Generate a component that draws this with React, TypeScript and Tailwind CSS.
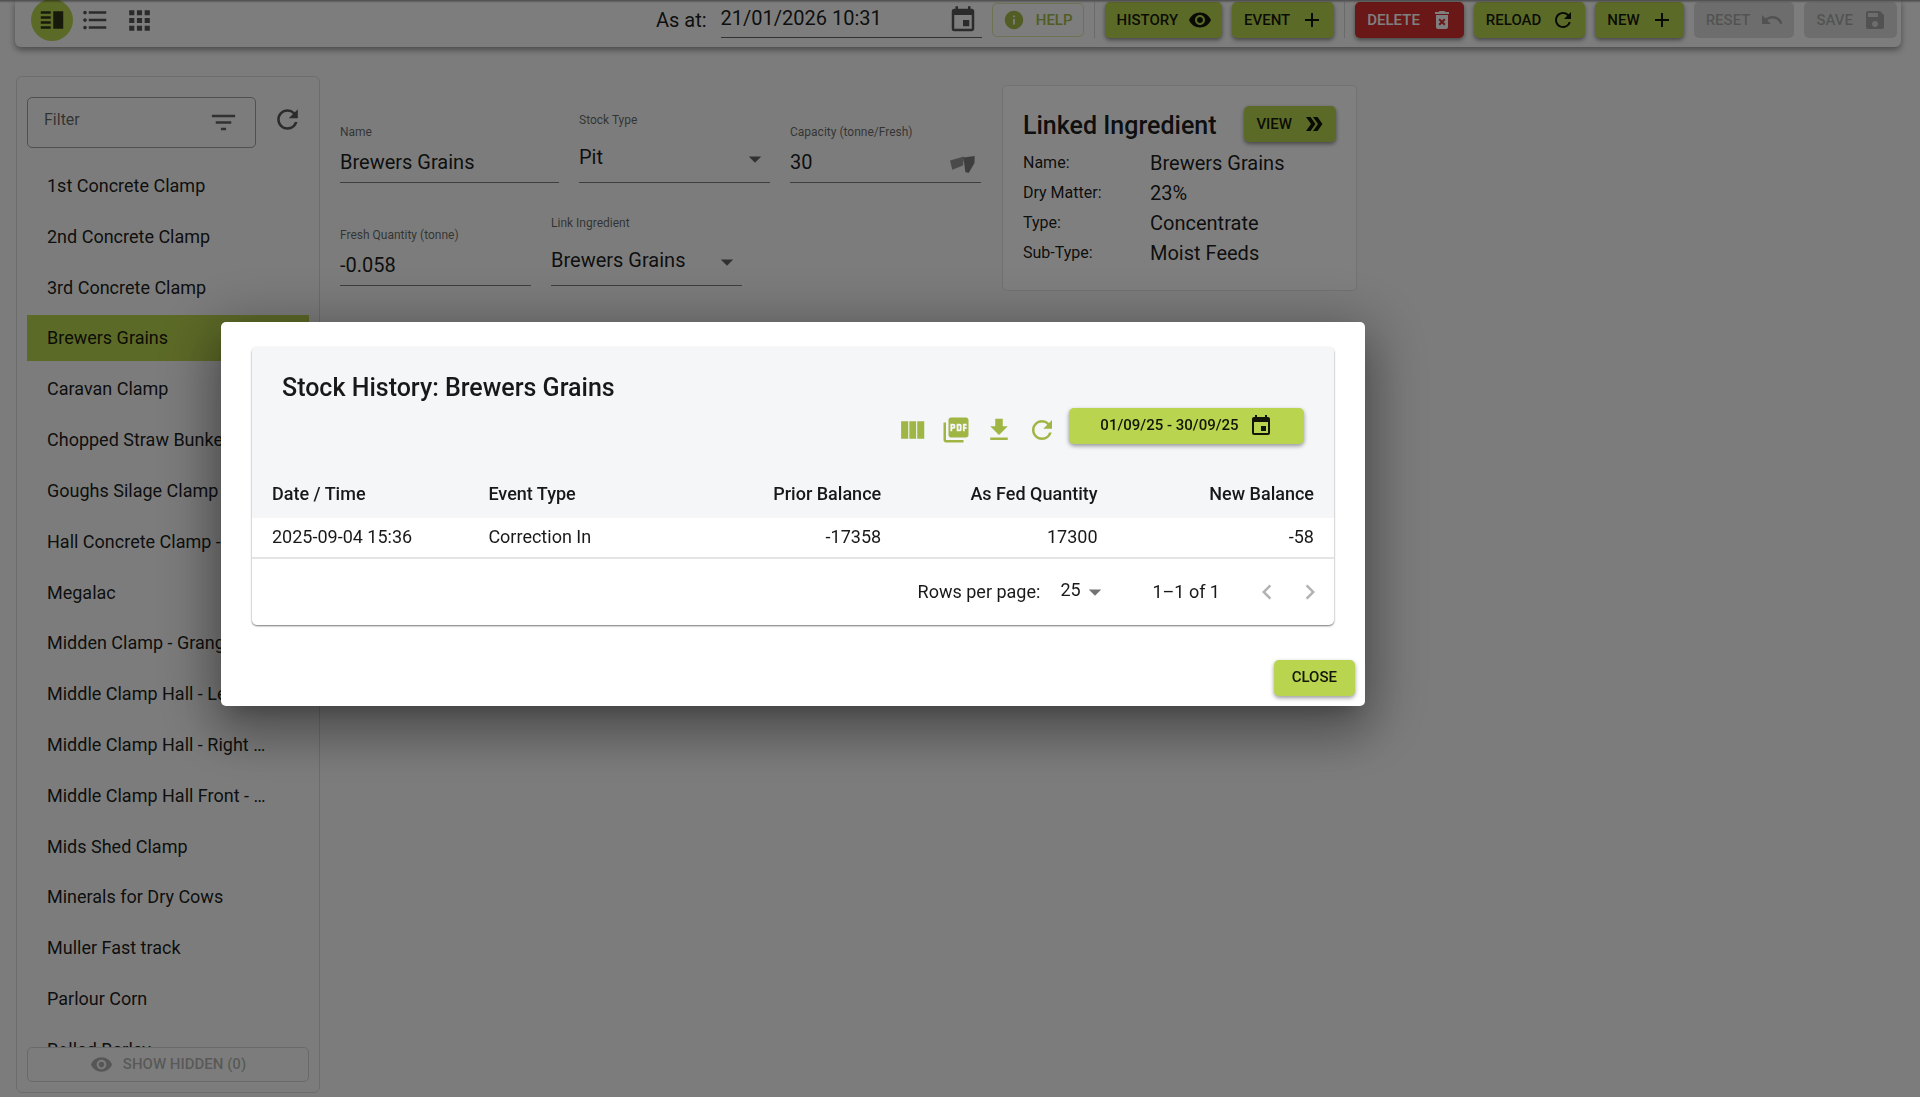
import React from "react";
import clsx from "clsx";
import type { IconType } from "react-icons";
import {
  MdAdd,
  MdApps,
  MdArrowDropDown,
  MdChevronLeft,
  MdChevronRight,
  MdDeleteForever,
  MdDoubleArrow,
  MdEvent,
  MdFilterList,
  MdFormatListBulleted,
  MdInfo,
  MdPictureAsPdf,
  MdRefresh,
  MdSave,
  MdUndo,
  MdVerticalSplit,
  MdVisibility,
} from "react-icons/md";

const stocks = [
  "1st Concrete Clamp",
  "2nd Concrete Clamp",
  "3rd Concrete Clamp",
  "Brewers Grains",
  "Caravan Clamp",
  "Chopped Straw Bunker",
  "Goughs Silage Clamp",
  "Hall Concrete Clamp - Left",
  "Megalac",
  "Midden Clamp - Grange",
  "Middle Clamp Hall - Left",
  "Middle Clamp Hall - Right Side",
  "Middle Clamp Hall Front - Left",
  "Mids Shed Clamp",
  "Minerals for Dry Cows",
  "Muller Fast track",
  "Parlour Corn",
  "Rolled Barley",
];

const tones = {
  green: "bg-[#b9d44f] text-black/90 shadow-[0_2px_4px_rgba(0,0,0,0.45)]",
  red: "bg-[#d32f2f] text-white shadow-[0_2px_4px_rgba(0,0,0,0.45)]",
  disabled: "bg-black/12 text-black/25",
};

function ActionButton({
  label,
  icon: Icon,
  tone = "green",
}: {
  label: string;
  icon: IconType;
  tone?: keyof typeof tones;
}) {
  return (
    <button
      type="button"
      disabled={tone === "disabled"}
      className={clsx(
        "flex h-9 shrink-0 items-center gap-[10px] rounded-[5px] pr-[10px] pl-3 text-[15px] font-medium whitespace-nowrap",
        tones[tone],
      )}
    >
      {label}
      <Icon className="size-6" aria-hidden />
    </button>
  );
}

function TextField({
  id,
  label,
  value,
  className,
  children,
}: {
  id: string;
  label: string;
  value: string;
  className: string;
  children?: React.ReactNode;
}) {
  return (
    <div className={clsx("flex flex-col justify-end", className)}>
      <label htmlFor={id} className="text-xs leading-4 text-black/60">
        {label}
      </label>
      <div className="flex h-[43px] items-center border-b border-black/50 pt-[2px]">
        <input id={id} defaultValue={value} className="w-full min-w-0 bg-transparent text-xl outline-none" />
        {children}
      </div>
    </div>
  );
}

function SelectField({ id, label, value }: { id: string; label: string; value: string }) {
  return (
    <div className="flex w-[191px] flex-col justify-end">
      <label htmlFor={id} className="text-xs leading-4 text-black/60">
        {label}
      </label>
      <div className="grid h-[55px] items-center border-b border-black/50 pt-2">
        <select
          id={id}
          className="col-start-1 row-start-1 w-full appearance-none bg-transparent pb-1 text-xl outline-none"
        >
          <option>{value}</option>
        </select>
        <MdArrowDropDown
          className="pointer-events-none col-start-1 row-start-1 size-[30px] justify-self-end text-black/60"
          aria-hidden
        />
      </div>
    </div>
  );
}

function Toolbar() {
  return (
    <header className="mr-[19px] ml-[15px] flex h-[47px] items-center rounded-b-md bg-[#f8faf8] pr-1 pb-[7px] pl-4 shadow-[0_3px_6px_rgba(0,0,0,0.4)]">
      <button
        type="button"
        aria-label="Split view"
        className="grid size-[42px] shrink-0 place-items-center rounded-full bg-[#b9d44f] text-black/75"
      >
        <MdVerticalSplit className="size-[30px]" />
      </button>
      <button type="button" aria-label="List view" className="grid h-[30px] w-11 place-items-center text-black/65">
        <MdFormatListBulleted className="size-[30px]" />
      </button>
      <button type="button" aria-label="Grid view" className="grid h-[30px] w-11 place-items-center text-black/65">
        <MdApps className="size-[31px]" />
      </button>

      <div className="ml-auto flex items-center">
        <label htmlFor="as-at" className="mr-[14px] text-xl">
          As at:
        </label>
        <div className="flex h-9 w-[261px] items-center border-b border-black/60 pr-1">
          <input
            id="as-at"
            defaultValue="21/01/2026 10:31"
            className="w-full min-w-0 bg-transparent pb-1 text-xl outline-none"
          />
          <MdEvent className="size-[30px] shrink-0 text-black/65" aria-hidden />
        </div>
        <button
          type="button"
          className="ml-[10px] flex h-[34px] w-[92px] items-center justify-between rounded-[5px] border border-[#b9d44f]/50 px-[10px] text-[15px] font-medium text-[#a3bb44]"
        >
          <MdInfo className="size-[22px]" aria-hidden />
          HELP
        </button>
        <div className="ml-[10px] h-9 w-px bg-black/15" />
        <div className="ml-[10px] flex gap-[10px]">
          <ActionButton label="HISTORY" icon={MdVisibility} />
          <ActionButton label="EVENT" icon={MdAdd} />
          <div className="h-9 w-px bg-black/15" />
          <ActionButton label="DELETE" icon={MdDeleteForever} tone="red" />
          <ActionButton label="RELOAD" icon={MdRefresh} />
          <ActionButton label="NEW" icon={MdAdd} />
          <ActionButton label="RESET" icon={MdUndo} tone="disabled" />
          <ActionButton label="SAVE" icon={MdSave} tone="disabled" />
        </div>
      </div>
    </header>
  );
}

function Sidebar() {
  return (
    <aside className="flex w-[304px] shrink-0 flex-col rounded-md border border-black/12 px-[10px] pt-5 pb-[10px]">
      <div className="flex items-center">
        <div className="flex h-[51px] w-[229px] items-center rounded-[5px] border border-black/35 pr-4 pl-4">
          <input
            aria-label="Filter"
            placeholder="Filter"
            className="w-full min-w-0 bg-transparent pb-[6px] text-base outline-none placeholder:text-black/60"
          />
          <MdFilterList className="size-[31px] shrink-0 text-black/60" aria-hidden />
        </div>
        <button type="button" aria-label="Refresh list" className="ml-4 pb-[6px] text-black/65">
          <MdRefresh className="size-[31px]" />
        </button>
      </div>
      <nav aria-label="Stocks" className="min-h-0 flex-1 basis-0 overflow-hidden pt-[15px]">
        <ul className="flex h-[910px] flex-col justify-between">
          {stocks.map((name) => (
            <li key={name}>
              <button
                type="button"
                className={clsx(
                  "h-[46px] w-full pr-10 pl-5 text-left text-lg",
                  name === "Brewers Grains" && "bg-[#b9d44f]",
                )}
              >
                <span className="block truncate">{name}</span>
              </button>
            </li>
          ))}
        </ul>
      </nav>
      <button
        type="button"
        disabled
        className="flex h-[35px] shrink-0 items-center justify-center gap-[10px] rounded-[5px] border border-black/15 text-[15px] font-medium text-black/30"
      >
        <MdVisibility className="size-[23px]" aria-hidden />
        SHOW HIDDEN (0)
      </button>
    </aside>
  );
}

const ingredient = [
  ["Name:", "Brewers Grains"],
  ["Dry Matter:", "23%"],
  ["Type:", "Concentrate"],
  ["Sub-Type:", "Moist Feeds"],
];

function LinkedIngredient() {
  return (
    <section className="h-[206px] w-[355px] shrink-0 rounded-[5px] border border-black/10 bg-white px-5 pt-5">
      <div className="flex h-9 items-center justify-between">
        <h2 className="pt-1 text-[25px] font-medium">Linked Ingredient</h2>
        <ActionButton label="VIEW" icon={MdDoubleArrow} />
      </div>
      <dl className="mt-[6px] grid grid-cols-[127px_1fr] items-center leading-[30px]">
        {ingredient.map(([term, detail]) => (
          <React.Fragment key={term}>
            <dt className="text-base leading-[30px]">{term}</dt>
            <dd className="text-xl leading-[30px]">{detail}</dd>
          </React.Fragment>
        ))}
      </dl>
    </section>
  );
}

function StockForm() {
  return (
    <form className="flex flex-1 items-start pl-5">
      <div className="mr-[21px] flex w-[641px] flex-wrap gap-x-5 gap-y-8 pt-9">
        <TextField id="name" label="Name" value="Brewers Grains" className="w-[219px]" />
        <SelectField id="stock-type" label="Stock Type" value="Pit" />
        <TextField id="capacity" label="Capacity (tonne/Fresh)" value="30" className="w-[191px]">
          <svg viewBox="0 0 26 24" className="mr-[6px] h-6 w-[26px] shrink-0" aria-hidden>
            <path d="M1 10.5 L15 6.5 L14 15.5 L3.3 19.7 Z" fill="#000" fillOpacity="0.4" />
            <path d="M14.5 7.5 L25.7 6 L25.5 13 L19.7 23 L16.3 22 Z" fill="#000" fillOpacity="0.5" />
          </svg>
        </TextField>
        <TextField id="quantity" label="Fresh Quantity (tonne)" value="-0.058" className="w-[191px]" />
        <SelectField id="link" label="Link Ingredient" value="Brewers Grains" />
      </div>
      <div className="pt-[9px]">
        <LinkedIngredient />
      </div>
    </form>
  );
}

const columns = ["Date / Time", "Event Type", "Prior Balance", "As Fed Quantity", "New Balance"];
const rows = [["2025-09-04 15:36", "Correction In", "-17358", "17300", "-58"]];

function HistoryDialog() {
  return (
    <div className="fixed inset-0 flex items-center justify-center bg-black/50 pr-[334px] pb-[70px]">
      <div
        role="dialog"
        aria-modal="true"
        aria-labelledby="history-title"
        className="w-[1144px] rounded-[5px] bg-white px-[10px] pt-[25px] pb-[10px] shadow-[0_14px_19px_-9px_rgba(0,0,0,0.2),0_30px_48px_4px_rgba(0,0,0,0.14),0_11px_58px_10px_rgba(0,0,0,0.3)]"
      >
        <div className="mx-[21px] overflow-hidden rounded-[5px] shadow-[0_1px_2px_rgba(0,0,0,0.55)]">
          <div className="bg-[#f4f6f8] px-[30px] pt-[21px]">
            <h1 id="history-title" className="text-[25px] leading-10 font-medium text-black/90">
              Stock History: Brewers Grains
            </h1>
            <div className="flex h-[62px] items-start justify-end">
              <div className="flex gap-[13px] pt-[7px] text-[#9fb544]">
                <button type="button" aria-label="Columns">
                  <svg viewBox="0 0 24 24" className="size-[30px]" fill="currentColor" aria-hidden>
                    <path d="M2.5 5h5.7v14H2.5zM9.1 5h5.4v14H9.1zM15.4 5H21v14h-5.6z" />
                  </svg>
                </button>
                <button type="button" aria-label="Export PDF">
                  <MdPictureAsPdf className="size-[30px]" />
                </button>
                <button type="button" aria-label="Download">
                  <svg viewBox="0 0 24 24" className="size-[30px]" fill="currentColor" aria-hidden>
                    <path d="M19 9h-4V3H9v6H5l7 7 7-7zM5 18v2h14v-2H5z" />
                  </svg>
                </button>
                <button type="button" aria-label="Refresh">
                  <MdRefresh className="size-[30px]" />
                </button>
              </div>
              <button
                type="button"
                className="ml-3 flex h-9 w-[235px] items-center justify-center gap-[10px] rounded-[5px] bg-[#b9d44f] text-[15px] font-medium shadow-[0_2px_4px_rgba(0,0,0,0.4)]"
              >
                01/09/25 - 30/09/25
                <MdEvent className="size-6" aria-hidden />
              </button>
            </div>
          </div>
          <table className="w-full table-fixed text-lg text-black/90">
            <thead className="bg-[#f4f6f8]">
              <tr className="h-12">
                {columns.map((name, i) => (
                  <th key={name} className={clsx("px-5 font-medium", i < 2 ? "text-left" : "text-right")}>
                    {name}
                  </th>
                ))}
              </tr>
            </thead>
            <tbody>
              {rows.map((row) => (
                <tr key={row[0]} className="h-10 border-b-2 border-[#e4e4e4]">
                  {row.map((cell, i) => (
                    <td key={columns[i]} className={clsx("px-5", i < 2 ? "text-left" : "text-right")}>
                      {cell}
                    </td>
                  ))}
                </tr>
              ))}
            </tbody>
          </table>
          <div className="flex h-[66px] items-center justify-end pr-[9px] text-lg text-black/90">
            <label htmlFor="page-size">Rows per page:</label>
            <div className="ml-5 grid w-[50px] items-center">
              <select
                id="page-size"
                className="col-start-1 row-start-1 appearance-none bg-transparent pb-1 outline-none"
              >
                <option>25</option>
              </select>
              <MdArrowDropDown
                className="pointer-events-none col-start-1 row-start-1 size-[30px] justify-self-end text-black/55"
                aria-hidden
              />
            </div>
            <span className="ml-[42px]">1–1 of 1</span>
            <button type="button" disabled aria-label="Previous page" className="ml-8 text-black/30">
              <MdChevronLeft className="size-[30px]" />
            </button>
            <button type="button" disabled aria-label="Next page" className="ml-[13px] text-black/30">
              <MdChevronRight className="size-[30px]" />
            </button>
          </div>
        </div>
        <div className="mt-[35px] flex justify-end">
          <button
            type="button"
            className="h-9 rounded-[5px] bg-[#b9d44f] px-[18px] text-[15px] font-medium shadow-[0_2px_4px_rgba(0,0,0,0.4)]"
          >
            CLOSE
          </button>
        </div>
      </div>
    </div>
  );
}

export default function App() {
  return (
    <div className="relative flex h-screen flex-col overflow-hidden bg-[#f6f8f6] font-[Roboto,sans-serif] text-black/90">
      <Toolbar />
      <div className="absolute inset-x-0 top-0 h-[3px] bg-linear-to-b from-black/40 to-transparent" />
      <main className="mt-[29px] mb-1 ml-4 flex min-h-0 flex-1">
        <Sidebar />
        <StockForm />
      </main>
      <HistoryDialog />
    </div>
  );
}
